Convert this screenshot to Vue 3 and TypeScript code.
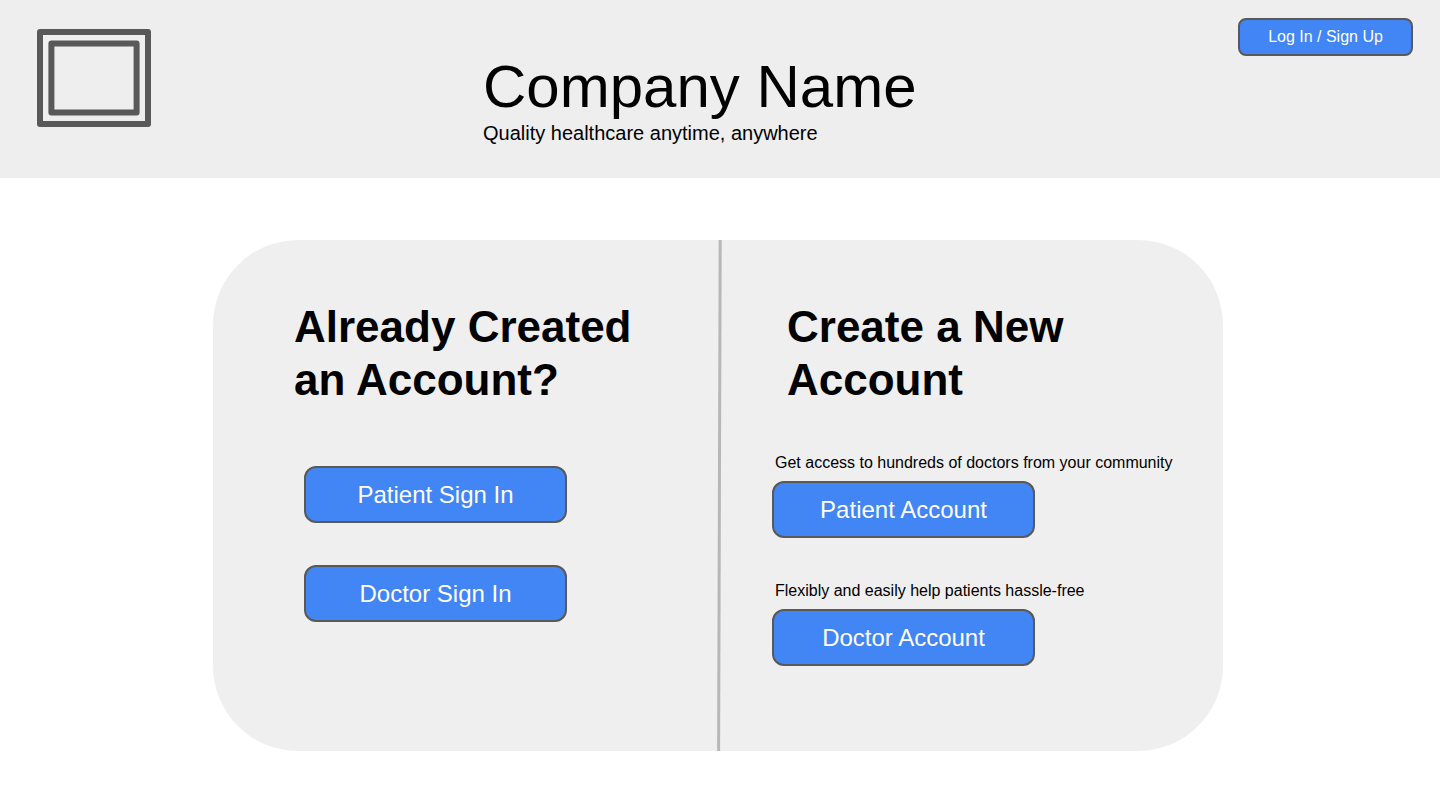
<script setup lang="ts">
interface Option {
  label: string
  note?: string
}

interface Panel {
  id: string
  title: string
  options: Option[]
}

const panels: Panel[] = [
  {
    id: 'sign-in',
    title: 'Already Created an Account?',
    options: [{ label: 'Patient Sign In' }, { label: 'Doctor Sign In' }],
  },
  {
    id: 'create',
    title: 'Create a New Account',
    options: [
      { label: 'Patient Account', note: 'Get access to hundreds of doctors from your community' },
      { label: 'Doctor Account', note: 'Flexibly and easily help patients hassle-free' },
    ],
  },
]
</script>

<template>
  <div class="page">
    <header class="header">
      <svg class="logo" viewBox="0 0 114 98" role="img" aria-label="Company logo">
        <rect x="3" y="3" width="108" height="92" fill="#efefef" />
        <rect x="14.4" y="14.5" width="85.2" height="69" fill="#eeeeee" />
      </svg>
      <div class="brand">
        <h1>Company Name</h1>
        <p>Quality healthcare anytime, anywhere</p>
      </div>
      <button class="btn login" type="button">Log In / Sign Up</button>
    </header>

    <main class="main">
      <div class="card">
        <section v-for="panel in panels" :key="panel.id" class="panel" :class="panel.id" :aria-labelledby="panel.id">
          <h2 :id="panel.id">{{ panel.title }}</h2>
          <div class="options">
            <div v-for="option in panel.options" :key="option.label" class="option">
              <p v-if="option.note" :id="option.label.replace(' ', '-')" class="note">{{ option.note }}</p>
              <button
                class="btn large"
                type="button"
                :aria-describedby="option.note ? option.label.replace(' ', '-') : undefined"
              >
                {{ option.label }}
              </button>
            </div>
          </div>
        </section>
        <svg class="divider" viewBox="0 0 6 512" preserveAspectRatio="none" aria-hidden="true">
          <line x1="4.2" y1="0" x2="2.6" y2="512" stroke="#b7b7b7" stroke-width="3" />
        </svg>
      </div>
    </main>
  </div>
</template>

<style>
body {
  background: #ffffff;
}
</style>

<style scoped>
.page {
  font-family: "Liberation Sans", Arial, sans-serif;
  color: #000000;
}

h1,
h2,
p {
  margin: 0;
}

.header {
  display: grid;
  grid-template-columns: 1fr 1fr 1fr;
  align-items: start;
  background: #eeeeee;
}

.logo {
  width: 114px;
  height: 98px;
  margin: 29px 0 0 37px;
  stroke: #595959;
  stroke-width: 6;
  stroke-linejoin: round;
}

.brand {
  padding: 53px 0 33px 3px;
  white-space: nowrap;
}

h1 {
  font-size: 60px;
  line-height: 68px;
  font-weight: 400;
}

.brand p {
  font-size: 20px;
  line-height: 24px;
}

.btn {
  display: block;
  box-sizing: border-box;
  padding: 0;
  border: 2px solid #595959;
  background: #4285f4;
  color: #ffffff;
  font-family: inherit;
  cursor: pointer;
}

.login {
  justify-self: end;
  width: 175px;
  height: 38px;
  margin: 18px 27px 0 0;
  border-radius: 8px;
  font-size: 16px;
}

.main {
  padding: 62px 217px 59px 213px;
}

.card {
  position: relative;
  display: grid;
  grid-template-columns: 1fr 1fr;
  padding: 60px 0 85px;
  border-radius: 85px;
  background: #efefef;
}

h2 {
  max-width: 350px;
  font-size: 44px;
  line-height: 53px;
  font-weight: 700;
}

.sign-in h2 {
  margin: 0 0 60px 81px;
}

.create h2 {
  margin: 0 0 46px 69px;
}

.options {
  display: flex;
  flex-direction: column;
  gap: 42px;
}

.sign-in .options {
  margin-left: 91px;
}

.create .options {
  margin-left: 54px;
}

.note {
  padding: 0 0 7px 3px;
  font-size: 16px;
  line-height: 22px;
}

.large {
  width: 263px;
  height: 57px;
  border-radius: 12px;
  font-size: 24px;
}

.divider {
  position: absolute;
  top: 0;
  left: 50%;
  width: 6px;
  height: 100%;
  margin-left: -2px;
  overflow: visible;
}
</style>
